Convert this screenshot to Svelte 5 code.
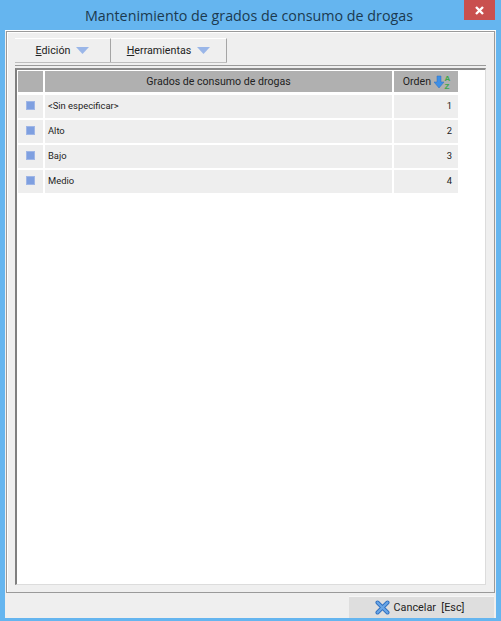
<script>
  const rows = [
    { name: '<Sin especificar>', order: 1 },
    { name: 'Alto', order: 2 },
    { name: 'Bajo', order: 3 },
    { name: 'Medio', order: 4 },
  ]
</script>

<div class="window">
  <div class="titlebar">
    <span class="title">Mantenimiento de grados de consumo de drogas</span>
    <button class="close" aria-label="Cerrar">
      <svg width="11" height="11" viewBox="0 0 11 11">
        <path d="M2 2 L9 9 M9 2 L2 9" stroke="#fff" stroke-width="2.4" />
      </svg>
    </button>
  </div>

  <div class="body">
    <div class="group">
      <div class="toolbar">
        <div class="tool first">
          <span><u>E</u>dición</span>
          <svg class="caret" width="13" height="7" viewBox="0 0 13 7"><path d="M0 0 H13 L6.5 7 Z" fill="#9ab6e8" /></svg>
        </div>
        <div class="tool second">
          <span><u>H</u>erramientas</span>
          <svg class="caret" width="13" height="7" viewBox="0 0 13 7"><path d="M0 0 H13 L6.5 7 Z" fill="#9ab6e8" /></svg>
        </div>
      </div>

      <div class="grid">
        <div class="row head">
          <div class="c-mark"></div>
          <div class="c-name">Grados de consumo de drogas</div>
          <div class="c-order">
            <span>Orden</span>
            <svg width="17" height="16" viewBox="0 0 17 16">
              <path d="M3 2 H7 V8 H10 L5 14 L0 8 H3 Z" fill="#3d8fe6" stroke="#2a6fc0" stroke-width="0.5" />
              <text x="10.5" y="7" class="az">A</text>
              <text x="10.5" y="15" class="az">Z</text>
            </svg>
          </div>
        </div>
        {#each rows as row}
          <div class="row">
            <div class="c-mark"><i class="bullet"></i></div>
            <div class="c-name">{row.name}</div>
            <div class="c-order">{row.order}</div>
          </div>
        {/each}
      </div>
    </div>

    <div class="footer">
      <div class="cancel">
        <svg width="15" height="15" viewBox="0 0 15 15">
          <path d="M2.5 2.5 L12.5 12.5 M12.5 2.5 L2.5 12.5" stroke="#2f6fc0" stroke-width="4" stroke-linecap="round" />
          <path d="M2.5 2.5 L12.5 12.5 M12.5 2.5 L2.5 12.5" stroke="#6aa6e6" stroke-width="2.2" stroke-linecap="round" />
        </svg>
        <span>Cancelar&nbsp; [Esc]</span>
      </div>
    </div>
  </div>
</div>

<style>
  :global(body) {
    margin: 0;
  }

  .window {
    width: 501px;
    height: 621px;
    box-sizing: border-box;
    display: flex;
    flex-direction: column;
    background: #65b5ef;
    padding: 0 5px 3px 5px;
    font-family: Roboto, "Liberation Sans", sans-serif;
    font-size: 11px;
    color: #222;
  }

  .titlebar {
    height: 30px;
    flex: none;
    display: flex;
    justify-content: center;
    align-items: center;
    position: relative;
  }

  .title {
    font-family: "Open Sans", "Noto Sans", sans-serif;
    font-size: 14.3px;
    color: #1b3a50;
    margin-left: -3px;
  }

  .close {
    position: absolute;
    top: 0;
    right: 1px;
    width: 31px;
    height: 20px;
    padding: 0;
    border: 0;
    background: #c9504f;
    display: flex;
    align-items: center;
    justify-content: center;
  }

  .body {
    flex: 1;
    display: flex;
    flex-direction: column;
    background: #efefef;
    border-top: 1px solid #fff;
  }

  .group {
    flex: 1;
    margin: 0 1px;
    border: 1px solid #9a9a9a;
    box-shadow: inset 1px 1px 0 #fff;
    padding: 6px 8px 7px 8px;
    display: flex;
    flex-direction: column;
  }

  .toolbar {
    display: flex;
    height: 24px;
    flex: none;
    border-bottom: 1px solid #bdbdbd;
    align-self: flex-start;
  }

  .tool {
    display: flex;
    align-items: center;
    justify-content: center;
    gap: 6px;
    border-top: 1px solid #fff;
    border-right: 1px solid #a5a5a5;
    font-size: 10.7px;
  }

  .first {
    width: 95px;
  }

  .second {
    width: 115px;
  }

  .grid {
    flex: 1;
    margin-top: 5px;
    border-top: 2px solid #8a8a8a;
    border-left: 2px solid #7f7f7f;
    border-right: 1px solid #dcdcdc;
    border-bottom: 1px solid #dcdcdc;
    background: #fff;
    padding: 1px 0 0 1px;
    box-shadow: 0 -2px 0 #efefef, 0 -3px 0 #9a9a9a;
  }

  .row {
    display: flex;
    height: 23px;
    margin-bottom: 2px;
    width: 440px;
    gap: 2px;
    font-size: 9.4px;
  }

  .row > div {
    background: #eeeeee;
    display: flex;
    align-items: center;
    padding-bottom: 2px;
    box-sizing: border-box;
  }

  .head {
    height: 21px;
    margin-bottom: 3px;
    font-size: 10.6px;
  }

  .row.head > div {
    background: #b0b0b0;
    padding-bottom: 0;
  }

  .c-mark {
    width: 25px;
    justify-content: center;
  }

  .c-name {
    flex: 1;
    padding-left: 3px;
  }

  .head .c-name {
    justify-content: center;
    padding-left: 0;
  }

  .c-order {
    width: 64px;
    justify-content: flex-end;
    padding-right: 6px;
    box-sizing: border-box;
  }

  .head .c-order {
    padding-right: 7px;
    gap: 3px;
  }

  .bullet {
    width: 7px;
    height: 7px;
    background: #7e9fe0;
    border: 0.5px solid #9fb6e6;
  }

  .az {
    font-size: 8px;
    font-weight: bold;
    fill: #3fa64a;
    font-family: "Liberation Sans", sans-serif;
  }

  .footer {
    height: 25px;
    flex: none;
    display: flex;
    justify-content: flex-end;
    align-items: flex-end;
    padding-right: 2px;
  }

  .cancel {
    width: 145px;
    height: 22px;
    box-sizing: border-box;
    padding-right: 4px;
    background: #dedede;
    border-top: 1px solid #f6f6f6;
    display: flex;
    align-items: center;
    justify-content: center;
    gap: 4px;
    font-size: 10.8px;
  }
</style>
